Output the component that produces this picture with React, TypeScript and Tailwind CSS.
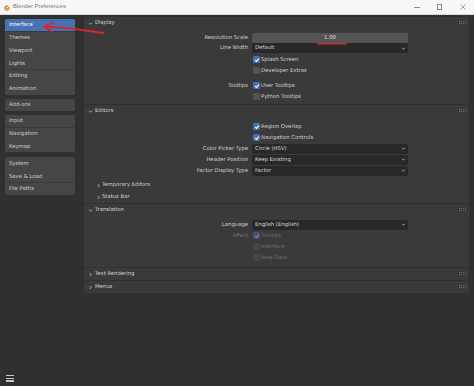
import React from "react";

const ChevDown = ({ c = "#c8c8c8" }: { c?: string }) => (
  <svg width="5" height="5" viewBox="0 0 10 10" className="shrink-0">
    <path d="M2 3.5 L5 6.5 L8 3.5" stroke={c} strokeWidth="1.6" fill="none" />
  </svg>
);
const ChevRight = () => (
  <svg width="5" height="5" viewBox="0 0 10 10" className="shrink-0">
    <path d="M3.5 2 L6.5 5 L3.5 8" stroke="#c8c8c8" strokeWidth="1.6" fill="none" />
  </svg>
);
const Grip = () => (
  <svg width="7" height="4" viewBox="0 0 7 4" className="shrink-0">
    {[0, 2, 4, 6].map((x) => (
      <React.Fragment key={x}>
        <rect x={x} y={0} width="1" height="1" fill="#6d6d6d" />
        <rect x={x} y={2} width="1" height="1" fill="#6d6d6d" />
      </React.Fragment>
    ))}
  </svg>
);

function Check({ on, dim }: { on?: boolean; dim?: boolean }) {
  const bg = on ? (dim ? "bg-[#3f5272]" : "bg-[#4772b3]") : dim ? "bg-[#474747]" : "bg-[#545454]";
  return (
    <div className={`w-[7px] h-[7px] rounded-[1.5px] ${bg} flex items-center justify-center shrink-0`}>
      {on && (
        <svg width="6" height="6" viewBox="0 0 10 10">
          <path d="M2 5.2 L4.2 7.4 L8.2 2.6" stroke={dim ? "#8a8a8a" : "#ffffff"} strokeWidth="1.8" fill="none" />
        </svg>
      )}
    </div>
  );
}

function Label({ children, dim }: { children?: React.ReactNode; dim?: boolean }) {
  return (
    <div className={`w-[164px] shrink-0 text-right pr-0 ${dim ? "text-[#6e6e6e]" : "text-[#d2d2d2]"}`}>{children}</div>
  );
}

function CheckRow({ label, text, on, dim, h = "h-[11px]" }: { label?: string; text: string; on?: boolean; dim?: boolean; h?: string }) {
  return (
    <div className={`flex items-center ${h}`}>
      <Label dim={dim}>{label}</Label>
      <div className="ml-[5px] flex items-center gap-[1px]">
        <Check on={on} dim={dim} />
        <span className={dim ? "text-[#6e6e6e]" : "text-[#d2d2d2]"}>{text}</span>
      </div>
    </div>
  );
}

function DropRow({ label, value, h = "h-[11px]" }: { label: string; value: string; h?: string }) {
  return (
    <div className={`flex items-center ${h}`}>
      <Label>{label}</Label>
      <div className="ml-[4px] w-[156px] h-[10px] bg-[#282828] rounded-[2px] flex items-center pl-[3px] pr-[2px] text-[#d8d8d8]">
        <span className="flex-1">{value}</span>
        <ChevDown c="#bdbdbd" />
      </div>
    </div>
  );
}

function Header({ title, open = true }: { title: string; open?: boolean }) {
  return (
    <div className="h-[12px] flex items-center pl-[4px] pr-[3px]">
      {open ? <ChevDown /> : <ChevRight />}
      <span className="ml-[2px] text-[#d6d6d6] flex-1">{title}</span>
      <Grip />
    </div>
  );
}

function SubHeader({ title }: { title: string }) {
  return (
    <div className="h-[12px] flex items-center pl-[12px]">
      <ChevRight />
      <span className="ml-[1px] text-[#d2d2d2]">{title}</span>
    </div>
  );
}

function NavGroup({ items, active }: { items: string[]; active?: string }) {
  return (
    <div className="w-[70px] rounded-[2px] overflow-hidden flex flex-col bg-[#3a3a3a] gap-[0.5px]">
      {items.map((it) => (
        <div
          key={it}
          className={`h-[12.2px] flex items-center pl-[4px] ${
            it === active ? "bg-[#4772b3] text-white" : "bg-[#464646] text-[#d0d0d0]"
          }`}
        >
          {it}
        </div>
      ))}
    </div>
  );
}

export default function App() {
  return (
    <div className="relative w-[474px] h-[386px] overflow-hidden bg-[#303030] flex flex-col font-['DejaVu_Sans',sans-serif] text-[5.3px] leading-none">
      {/* title bar */}
      <div className="h-[15px] shrink-0 bg-[#f7f7f7] border-b border-[#d8d8d8] flex items-center font-['Liberation_Sans',sans-serif]">
        <div className="ml-[3px] w-[7px] h-[7px] relative shrink-0">
          <svg width="7" height="7" viewBox="0 0 10 10">
            <path d="M1 5.5 L4 2.5 L4.5 1 L9 4.5 A3.6 3.6 0 1 1 2.4 7.4 Z" fill="#e87d0d" />
            <circle cx="5.6" cy="6" r="2" fill="#ffffff" />
            <circle cx="5.6" cy="6" r="1.1" fill="#265787" />
          </svg>
        </div>
        <span className="ml-[3px] text-[5.8px] text-[#777777]">Blender Preferences</span>
        <div className="ml-auto flex items-center h-full">
          <div className="w-[23px] h-full flex items-center justify-center">
            <div className="w-[6px] h-[0.8px] bg-[#8a8a8a]" />
          </div>
          <div className="w-[23px] h-full flex items-center justify-center">
            <div className="w-[5.5px] h-[5.5px] border-[0.8px] border-[#8a8a8a]" />
          </div>
          <div className="w-[23px] h-full flex items-center justify-center">
            <svg width="6" height="6" viewBox="0 0 6 6">
              <path d="M0.5 0.5 L5.5 5.5 M5.5 0.5 L0.5 5.5" stroke="#8a8a8a" strokeWidth="0.8" />
            </svg>
          </div>
        </div>
      </div>

      <div className="flex flex-1 min-h-0">
        {/* nav */}
        <div className="w-[84px] shrink-0 flex flex-col pl-[5px] pt-[4px]">
          <NavGroup items={["Interface", "Themes", "Viewport", "Lights", "Editing", "Animation"]} active="Interface" />
          <div className="mt-[4px]">
            <NavGroup items={["Add-ons"]} />
          </div>
          <div className="mt-[4px]">
            <NavGroup items={["Input", "Navigation", "Keymap"]} />
          </div>
          <div className="mt-[5px]">
            <NavGroup items={["System", "Save & Load", "File Paths"]} />
          </div>
          <div className="mt-auto mb-[4px] ml-[1px] flex flex-col gap-[1.3px] w-[8px]">
            <div className="h-[1.6px] bg-[#c8c8c8]" />
            <div className="h-[1.6px] bg-[#c8c8c8]" />
            <div className="h-[1.6px] bg-[#c8c8c8]" />
          </div>
        </div>

        {/* main */}
        <div className="flex-1 flex flex-col pt-[2px] pr-[5px] gap-[1px]">
          {/* Display */}
          <div className="bg-[#3a3a3a] rounded-[2px] pb-[2px]">
            <Header title="Display" />
            <div className="pt-[4px]">
              <div className="flex items-center h-[10px]">
                <Label>Resolution Scale</Label>
                <div className="ml-[4px] w-[156px] h-[10px] bg-[#545454] rounded-[2px] flex items-center justify-center text-[#e0e0e0]">
                  1.00
                </div>
              </div>
              <DropRow label="Line Width" value="Default" h="h-[10px]" />
              <div className="mt-[1px]">
                <CheckRow text="Splash Screen" on />
                <CheckRow text="Developer Extras" />
              </div>
              <div className="mt-[4px]">
                <CheckRow label="Tooltips" text="User Tooltips" on />
                <CheckRow text="Python Tooltips" />
              </div>
            </div>
          </div>

          {/* Editors */}
          <div className="bg-[#3a3a3a] rounded-[2px]">
            <Header title="Editors" />
            <div className="pt-[4px]">
              <CheckRow text="Region Overlap" on />
              <CheckRow text="Navigation Controls" on />
              <DropRow label="Color Picker Type" value="Circle (HSV)" />
              <DropRow label="Header Position" value="Keep Existing" />
              <DropRow label="Factor Display Type" value="Factor" />
            </div>
            <div className="mt-[3px]">
              <SubHeader title="Temporary Editors" />
              <SubHeader title="Status Bar" />
            </div>
          </div>

          {/* Translation */}
          <div className="bg-[#3a3a3a] rounded-[2px] pb-[4px]">
            <Header title="Translation" />
            <div className="pt-[3px]">
              <DropRow label="Language" value="English (English)" />
              <CheckRow label="Affect" text="Tooltips" on dim />
              <CheckRow text="Interface" dim />
              <CheckRow text="New Data" dim />
            </div>
          </div>

          <div className="bg-[#3a3a3a] rounded-[2px]">
            <Header title="Text Rendering" open={false} />
          </div>
          <div className="bg-[#3a3a3a] rounded-[2px]">
            <Header title="Menus" open={false} />
          </div>
        </div>
      </div>

      {/* annotations */}
      <svg className="absolute inset-0 pointer-events-none" width="474" height="386" viewBox="0 0 474 386">
        <path d="M45 26.5 Q72 28 103 33" stroke="#d9262c" strokeWidth="2" fill="none" strokeLinecap="round" />
        <path d="M53 22.5 L44 26.5 L52 31.5" stroke="#d9262c" strokeWidth="1.8" fill="none" strokeLinecap="round" strokeLinejoin="round" />
        <path d="M318 43.8 L346 43.8" stroke="#d9262c" strokeWidth="1.6" strokeLinecap="round" />
      </svg>
    </div>
  );
}
